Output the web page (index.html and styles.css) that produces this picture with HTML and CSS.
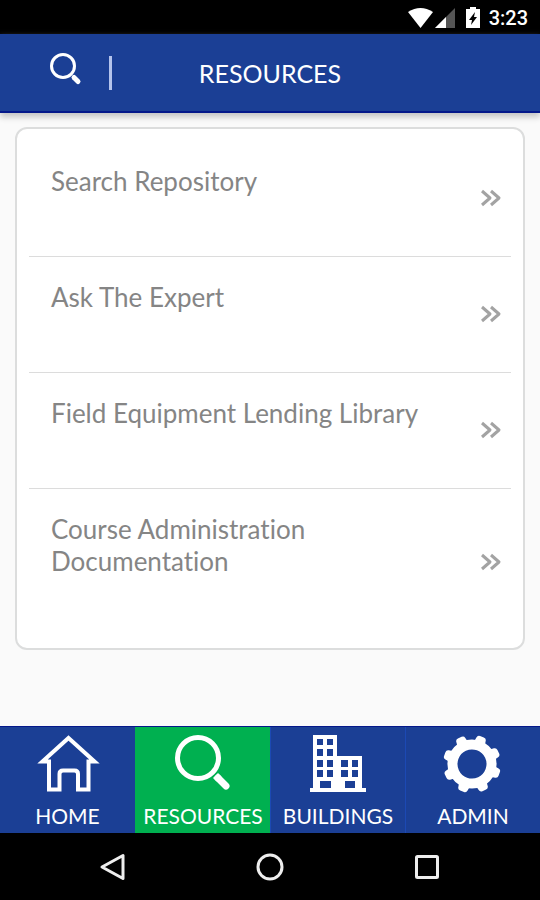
FILE: index.html
```html
<!DOCTYPE html>
<html lang="en">
<head>
<meta charset="utf-8">
<meta name="viewport" content="width=device-width, initial-scale=1">
<title>Resources</title>
<link rel="stylesheet" href="styles.css">
</head>
<body>
<div class="status-bar">
  <svg class="signals" width="76" height="24" viewBox="0 0 76 24" aria-hidden="true">
    <path class="solid" d="M1 7Q13.500-1 26 7L13.500 23Z"/>
    <path class="dim" d="M48 3V23H28Z"/>
    <path class="solid" d="M39 12V23H28Z"/>
    <path class="solid" d="M63 4V2h6v2h4v19H59V4Z"/>
    <path class="bolt" d="M68 7l-6 8h3l-1 5 6-8h-3z"/>
  </svg>
  <time class="clock">3:23</time>
</div>
<header class="app-header">
  <div class="tools">
    <button class="search" type="button" aria-label="Search">
      <svg width="32" height="34" viewBox="0 0 32 34"><circle cx="13" cy="10" r="11.500"/><path class="handle" d="M24 21.500l4 4"/></svg>
    </button>
  </div>
  <h1>RESOURCES</h1>
</header>
<main>
  <ul class="card">
    <li><a href="#search"><span>Search Repository</span><svg class="more" width="22" height="18" viewBox="0 0 22 18" aria-hidden="true"><path d="M2 1l8 7-8 7M11 1l8 7-8 7"/></svg></a></li>
    <li><a href="#expert"><span>Ask The Expert</span><svg class="more" width="22" height="18" viewBox="0 0 22 18" aria-hidden="true"><path d="M2 1l8 7-8 7M11 1l8 7-8 7"/></svg></a></li>
    <li><a href="#library"><span>Field Equipment Lending Library</span><svg class="more" width="22" height="18" viewBox="0 0 22 18" aria-hidden="true"><path d="M2 1l8 7-8 7M11 1l8 7-8 7"/></svg></a></li>
    <li><a href="#courses"><span>Course Administration<br>Documentation</span><svg class="more" width="22" height="18" viewBox="0 0 22 18" aria-hidden="true"><path d="M2 1l8 7-8 7M11 1l8 7-8 7"/></svg></a></li>
  </ul>
</main>
<nav class="tabs">
  <a href="#home">
    <svg width="64" height="60" viewBox="0 0 64 60" aria-hidden="true"><path class="line" d="M32.500 4L58.500 27.500H52.500V55.500H42V40Q42 36.500 38.500 36.500H27Q23.500 36.500 23.500 40V55.500H13V27.500H6.500Z"/></svg>
    <span>HOME</span>
  </a>
  <a href="#resources" class="current" aria-current="page">
    <svg width="64" height="60" viewBox="0 0 64 60" aria-hidden="true"><circle class="ring" cx="27" cy="24" r="20.500"/><path class="grip" d="M44.500 41.500L48 45"/><path class="grip round" d="M47 44L55 52"/></svg>
    <span>RESOURCES</span>
  </a>
  <a href="#buildings">
    <svg width="64" height="60" viewBox="0 0 64 60" aria-hidden="true"><path class="solid" fill-rule="evenodd" d="M7 1H31V22H56V54H60V58H4V54H7ZM11 5v6h6V5ZM21 5v6h6V5ZM11 15v7h6v-7ZM21 15v7h6v-7ZM11 26v7h6v-7ZM21 26v7h6v-7ZM11 36v7h6v-7ZM21 36v7h6v-7ZM14 47v7h11v-7ZM35 26v7h7v-7ZM46 26v7h6v-7ZM35 36v7h7v-7ZM46 36v7h6v-7ZM39 47v7h10v-7Z"/></svg>
    <span>BUILDINGS</span>
  </a>
  <a href="#admin">
    <svg width="64" height="60" viewBox="0 0 64 60" aria-hidden="true">
      <g transform="translate(31 30) rotate(20)">
        <circle class="cog" r="19.500"/>
        <path class="teeth" d="M-3-20L-2-26H2L3-20ZM-3 20L-2 26H2L3 20ZM-20-3L-26-2V2L-20 3ZM20-3L26-2V2L20 3Z"/>
        <path class="teeth" transform="rotate(45)" d="M-3-20L-2-26H2L3-20ZM-3 20L-2 26H2L3 20ZM-20-3L-26-2V2L-20 3ZM20-3L26-2V2L20 3Z"/>
      </g>
    </svg>
    <span>ADMIN</span>
  </a>
</nav>
<div class="system-nav">
  <button type="button" aria-label="Back"><svg width="28" height="28" viewBox="0 0 28 28"><path d="M24 2.500V25.500L3 14Z"/></svg></button>
  <button type="button" aria-label="Home"><svg width="28" height="28" viewBox="0 0 28 28"><circle cx="14" cy="14" r="12"/></svg></button>
  <button type="button" aria-label="Recent apps"><svg width="28" height="28" viewBox="0 0 28 28"><rect x="3.500" y="3.500" width="21" height="21" rx="1"/></svg></button>
</div>
</body>
</html>
```
FILE: styles.css
```css
* { box-sizing: border-box; }
body {
  margin: 0;
  min-height: 100vh;
  display: flex;
  flex-direction: column;
  background: #fafafa;
  font-family: Lato, "Liberation Sans", sans-serif;
  font-variant-ligatures: none;
}
svg { display: block; flex: none; fill: none; stroke-linejoin: round; overflow: visible; }
a { color: inherit; text-decoration: none; }
button { padding: 0; border: 0; background: none; }
.solid { fill: #fff; }

.status-bar {
  height: 34px;
  padding: 0 12px;
  display: flex;
  align-items: center;
  justify-content: flex-end;
  gap: 6px;
  background: #000;
  color: #fff;
}
.dim { fill: #555; }
.bolt { fill: #000; }
.clock { font: 500 20px/24px Roboto, sans-serif; padding-top: 2px; }

.app-header {
  height: 79px;
  display: grid;
  grid-template-columns: 1fr auto 1fr;
  align-items: center;
  background: #1b3f95;
  border-bottom: 2px solid #04188a;
  box-shadow: 0 4px 6px #c4c4c4;
  color: #fff;
}
.tools { display: flex; padding-left: 50px; }
.search { padding-right: 27px; border-right: 3px solid #b4c3ec; }
.search svg { stroke: #fff; stroke-width: 3; }
.search .handle { stroke-width: 5; stroke-linecap: round; }
h1 { margin: 0; font-size: 25px; line-height: 32px; font-weight: 400; }

main { flex: 1; padding: 14px 15px; }
.card {
  margin: 0;
  padding: 12px;
  list-style: none;
  background: #fff;
  border: 2px solid #dcdddd;
  border-radius: 12px;
}
.card li + li { border-top: 1px solid #dcdcdc; }
.card a {
  display: flex;
  align-items: center;
  justify-content: space-between;
  padding: 0 9px 0 22px;
  color: #858585;
  font-size: 26px;
  line-height: 32px;
}
.card span { padding: 24px 0 59px; }
.more { stroke: #a3a3a3; stroke-width: 3; }

.tabs {
  height: 107px;
  display: grid;
  grid-template-columns: repeat(4, 1fr);
  background: #1b3f95;
  border-top: 1px solid #04188a;
  color: #fff;
}
.tabs a {
  display: flex;
  flex-direction: column;
  align-items: center;
  padding-top: 7px;
  font-size: 21px;
  line-height: 24px;
}
.tabs span { margin-top: 10px; }
.tabs a + a { border-left: 1px solid #1c49b4; }
.tabs .current { background: #00b050; border-color: #00b050; }
.line { stroke: #fff; stroke-width: 4; stroke-linejoin: miter; }
.ring { stroke: #fff; stroke-width: 5; }
.grip { stroke: #fff; stroke-width: 7; }
.round { stroke-linecap: round; }
.cog { stroke: #fff; stroke-width: 10; }
.teeth { fill: #fff; stroke: #fff; stroke-width: 6; }

.system-nav {
  height: 67px;
  display: flex;
  justify-content: center;
  background: #000;
}
.system-nav button { width: 157px; display: grid; place-items: center; }
.system-nav svg { stroke: #eee; stroke-width: 3; }
```
